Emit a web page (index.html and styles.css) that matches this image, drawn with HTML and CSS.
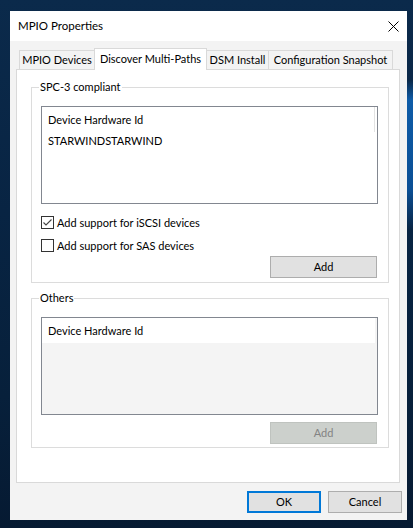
FILE: index.html
```html
<!DOCTYPE html>
<html>
<head>
<meta charset="utf-8">
<title>MPIO Properties</title>
<link rel="stylesheet" href="styles.css">
</head>
<body>
<div class="window">
  <div class="titlebar">
    <span class="title">MPIO Properties</span>
    <svg class="close" width="11" height="11" viewBox="0 0 11 11"><path d="M0.5 0.5 L10.5 10.5 M10.5 0.5 L0.5 10.5" stroke="#000" stroke-width="1" fill="none"/></svg>
  </div>
  <div class="content">
    <div class="tabs">
      <div class="tab t1">MPIO Devices</div>
      <div class="tab sel t2">Discover Multi-Paths</div>
      <div class="tab t3">DSM Install</div>
      <div class="tab t4">Configuration Snapshot</div>
    </div>
    <div class="panel">
      <div class="group g1">
        <span class="legend">SPC-3 compliant</span>
        <div class="listbox">
          <div class="lb-header">Device Hardware Id</div>
          <div class="lb-item">STARWINDSTARWIND</div>
        </div>
        <div class="check c1"><span class="box"><svg width="11" height="11" viewBox="0 0 11 11"><path d="M1.5 5.5 L4 8 L9.5 2.5" stroke="#444" stroke-width="1.1" fill="none"/></svg></span>Add support for iSCSI devices</div>
        <div class="check c2"><span class="box"></span>Add support for SAS devices</div>
        <div class="btnrow r1"><div class="btn add">Add</div></div>
      </div>
      <div class="group g2">
        <span class="legend">Others</span>
        <div class="listbox disabled">
          <div class="lb-header plain">Device Hardware Id</div>
        </div>
        <div class="btnrow r2"><div class="btn add off">Add</div></div>
      </div>
    </div>
    <div class="footer">
      <div class="btn ok">OK</div>
      <div class="btn cancel">Cancel</div>
    </div>
  </div>
</div>
</body>
</html>
```
FILE: styles.css
```css
html, body {
  margin: 0;
  padding: 0;
}
body {
  width: 413px;
  height: 528px;
  overflow: hidden;
  font-family: Lato, "Noto Sans", sans-serif;
  font-size: 11px;
  color: #000;
  background:
    linear-gradient(180deg, rgba(14,92,168,0) 80px, #0e5ca8 100px, #0b4f95 190px, rgba(14,92,168,0) 230px) right top / 6px 100% no-repeat,
    linear-gradient(180deg, #0b2a4b 0%, #082443 40%, #07203b 75%, #061a32 100%);
}
.window {
  margin: 11px 0 0 10px;
  width: 397px;
  height: 509px;
  background: #f3f3f3;
  display: flex;
  flex-direction: column;
}
.titlebar {
  height: 30px;
  background: #fff;
  display: flex;
  align-items: center;
  padding-left: 8px;
  flex-shrink: 0;
}
.title {
  font-size: 11.5px;
  line-height: 16px;
}
.close {
  margin-left: auto;
  margin-right: 8px;
}
.content {
  padding: 0 7px 0 6px;
}
.tabs {
  display: flex;
  align-items: flex-end;
  height: 22px;
  margin-top: 7px;
  margin-bottom: -1px;
  padding-left: 3px;
  position: relative;
  z-index: 1;
}
.tab {
  box-sizing: border-box;
  height: 19px;
  margin-bottom: 1px;
  border: 1px solid #d9d9d9;
  border-bottom: none;
  text-align: center;
  line-height: 18px;
  white-space: nowrap;
  margin-left: -1px;
}
.tab.t1 { width: 76px; margin-left: 0; }
.tab.t2 { width: 113px; }
.tab.t3 { width: 63px; }
.tab.t4 { width: 125px; }
.tab.sel {
  height: 22px;
  margin-bottom: 0;
  background: #fff;
  line-height: 19px;
  padding-bottom: 2px;
}
.panel {
  box-sizing: border-box;
  height: 414px;
  border: 1px solid #d9d9d9;
  background: #fff;
  padding: 17px 0 0 14px;
}
.group {
  position: relative;
  box-sizing: border-box;
  width: 358px;
  border: 1px solid #dcdcdc;
  padding: 18px 10px 4px 9px;
}
.group.g2 {
  margin-top: 15px;
  padding-bottom: 3px;
}
.legend {
  position: absolute;
  top: -9px;
  left: 7px;
  padding: 0 1px;
  background: #fff;
  line-height: 16px;
}
.listbox {
  box-sizing: border-box;
  width: 337px;
  height: 98px;
  border: 1px solid #828790;
  background: #fff;
}
.listbox.disabled {
  background: #f4f4f4;
}
.lb-header {
  box-sizing: border-box;
  width: 333px;
  height: 25px;
  line-height: 25px;
  padding-left: 6px;
  background: #fff;
  border-right: 1px solid #e3e3e3;
}
.lb-header.plain {
  border-right: none;
}
.lb-item {
  height: 17px;
  line-height: 17px;
  padding-left: 6px;
}
.check {
  display: flex;
  align-items: center;
  height: 13px;
  line-height: 13px;
  white-space: nowrap;
}
.check.c1 { margin-top: 12px; }
.check.c2 { margin-top: 10px; }
.box {
  box-sizing: border-box;
  width: 13px;
  height: 13px;
  border: 1px solid #333;
  background: #fff;
  margin-right: 3px;
  flex-shrink: 0;
  display: flex;
  align-items: center;
  justify-content: center;
}
.btnrow {
  display: flex;
  justify-content: flex-end;
  padding-right: 1px;
}
.btnrow.r1 { margin-top: 4px; }
.btnrow.r2 { margin-top: 7px; }
.btn {
  box-sizing: border-box;
  height: 22px;
  border: 1px solid #adadad;
  background: #e1e1e1;
  text-align: center;
  line-height: 20px;
}
.btn.add { width: 107px; }
.btn.off {
  background: #ccd0cc;
  border-color: #bfc3bf;
  color: #838383;
}
.footer {
  display: flex;
  justify-content: flex-end;
  gap: 7px;
  margin-top: 8px;
  margin-right: -2px;
}
.btn.ok, .btn.cancel { width: 74px; }
.btn.ok {
  border: 2px solid #0078d7;
  line-height: 18px;
}
```
